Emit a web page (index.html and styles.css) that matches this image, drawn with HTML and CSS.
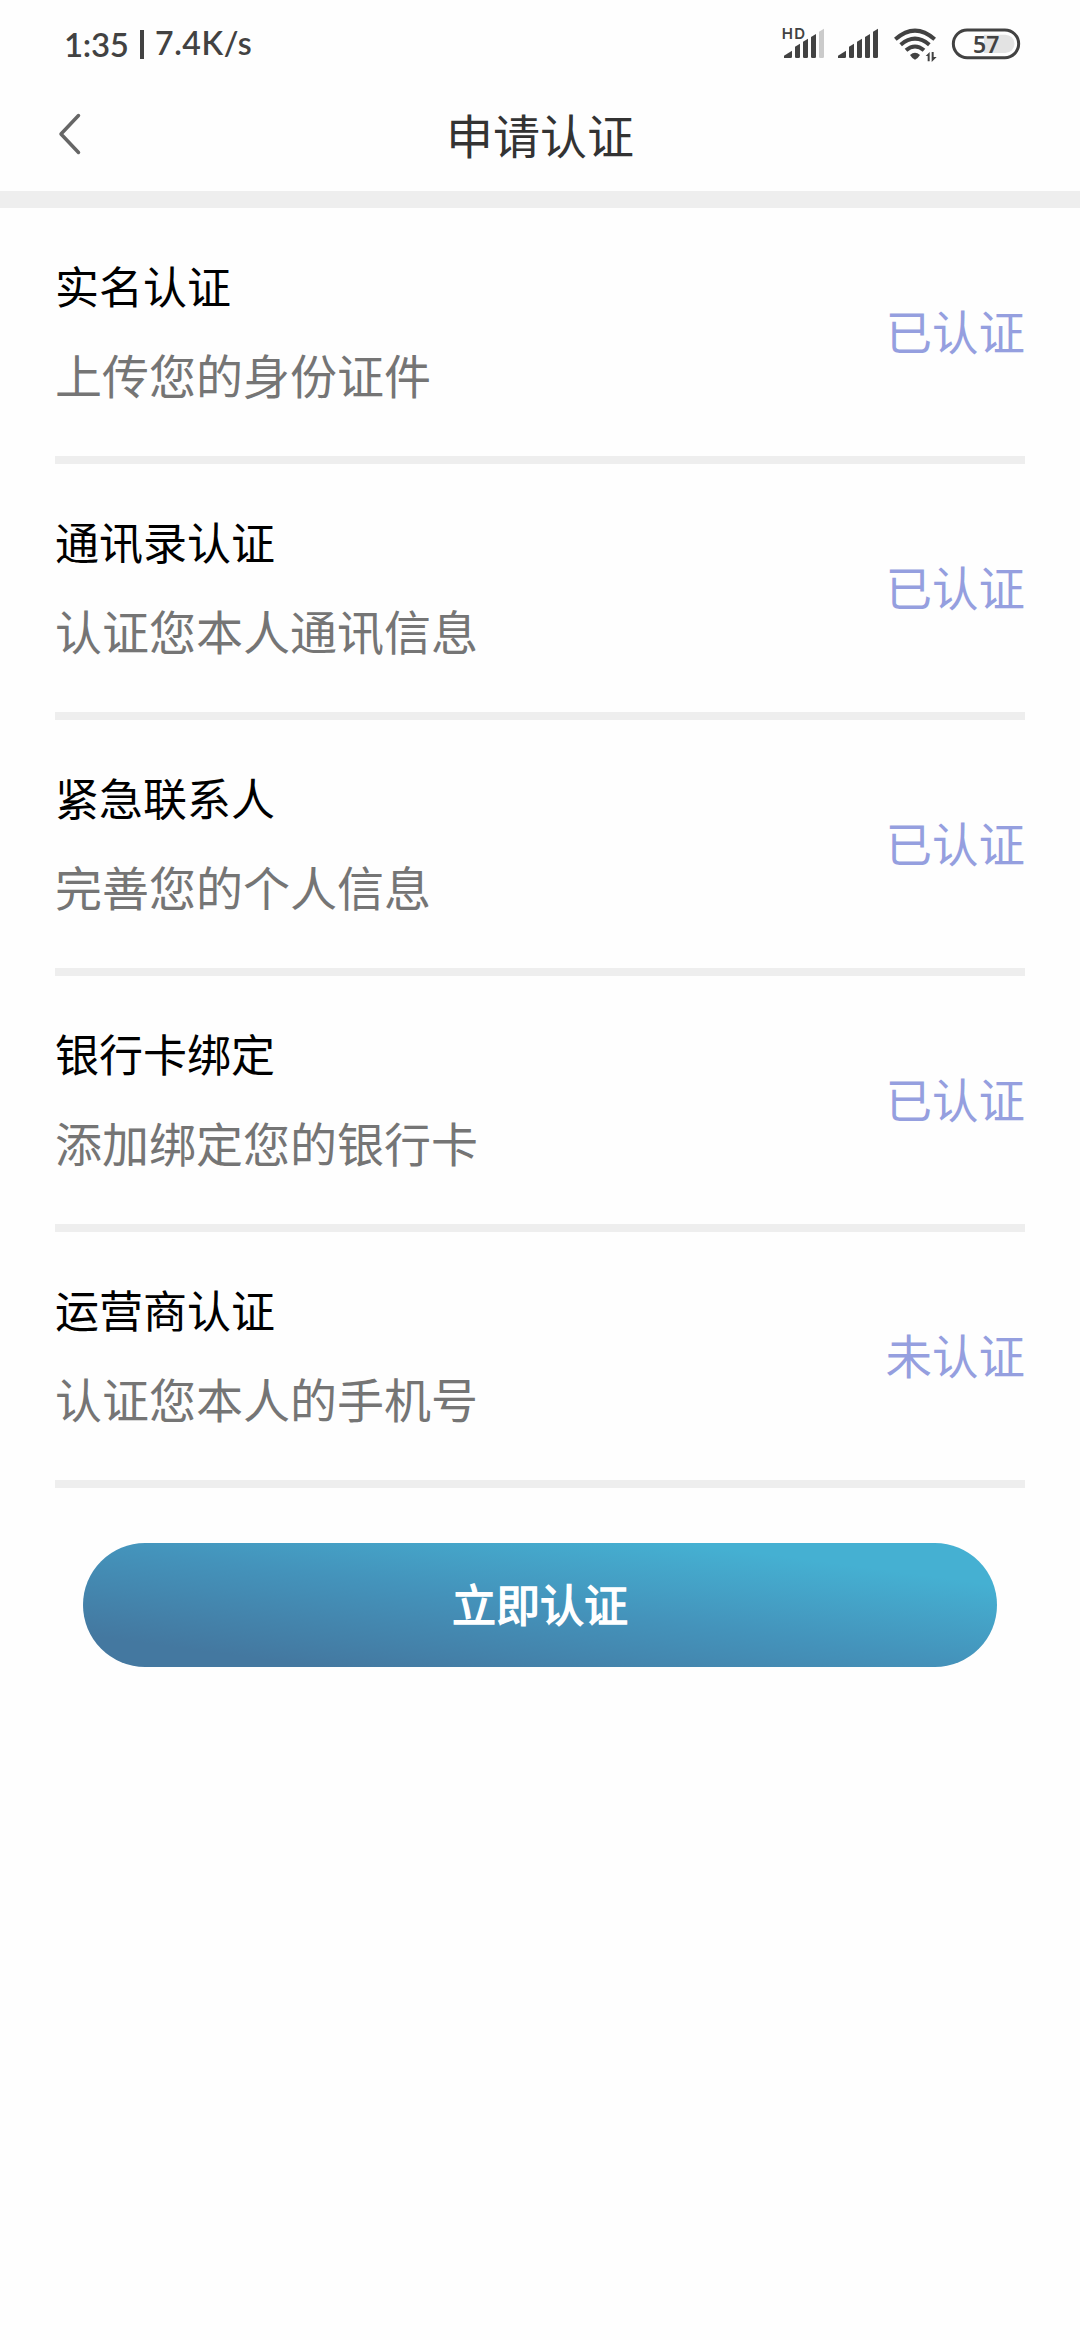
FILE: index.html
```html
<!DOCTYPE html>
<html lang="zh-CN">
<head>
<meta charset="UTF-8">
<title>申请认证</title>
<link rel="stylesheet" href="styles.css">
</head>
<body>
<div class="status-bar">
  <div class="status-left">
    <span class="clock">1:35</span>
    <span class="separator"></span>
    <span class="speed">7.4K/s</span>
  </div>
  <svg class="status-icons" viewBox="0 0 810 210" aria-hidden="true">
    <text class="hd" x="35" y="87" textLength="70">HD</text>
    <g fill="#424242">
      <path d="M42 144V137L66 122V140Q66 144 62 144Z"/>
      <path d="M75 110L90 101V140Q90 144 86 144H79Q75 144 75 140Z"/>
      <path d="M99 95L114 86V140Q114 144 110 144H103Q99 144 99 140Z"/>
      <path d="M123 81L138 72V140Q138 144 134 144H127Q123 144 123 140Z"/>
      <path fill="#cbcbcb" d="M147 65L162 56V140Q162 144 158 144H151Q147 144 147 140Z"/>
      <path d="M204 144V137L228 122V140Q228 144 224 144Z"/>
      <path d="M237 110L252 101V140Q252 144 248 144H241Q237 144 237 140Z"/>
      <path d="M261 95L276 86V140Q276 144 272 144H265Q261 144 261 140Z"/>
      <path d="M285 81L300 72V140Q300 144 296 144H289Q285 144 285 140Z"/>
      <path d="M309 65L324 56V140Q324 144 320 144H313Q309 144 309 140Z"/>
      <path d="M420 135Q435 122 450 135Q444 145 435 149Q426 145 420 135Z"/>
      <path d="M467 138L479 126V154H473V138ZM485 126H491V141H500L485 156Z"/>
    </g>
    <g fill="none" stroke="#424242" stroke-width="12">
      <path d="M376 88Q435 36 494 88"/>
      <path d="M392 104Q435 68 478 104"/>
      <path d="M408 121Q435 98 462 121"/>
    </g>
    <path d="M642 74H706A27 27 0 0 1 706 129H642Z" fill="#e3e3e3"/>
    <rect x="550" y="60" width="196" height="83" rx="41.500" fill="none" stroke="#424242" stroke-width="9"/>
    <text class="level" x="609" y="129">57</text>
  </svg>
</div>
<header class="nav">
  <svg class="back" viewBox="0 0 24 42" aria-hidden="true"><path d="M20.500 2.500L3 21L20.500 39.500"/></svg>
  <h1 class="title">申请认证</h1>
</header>
<main class="list">
  <section class="item">
    <div><h2 class="name">实名认证</h2><p class="desc">上传您的身份证件</p></div>
    <span class="state">已认证</span>
  </section>
  <section class="item">
    <div><h2 class="name">通讯录认证</h2><p class="desc">认证您本人通讯信息</p></div>
    <span class="state">已认证</span>
  </section>
  <section class="item">
    <div><h2 class="name">紧急联系人</h2><p class="desc">完善您的个人信息</p></div>
    <span class="state">已认证</span>
  </section>
  <section class="item">
    <div><h2 class="name">银行卡绑定</h2><p class="desc">添加绑定您的银行卡</p></div>
    <span class="state">已认证</span>
  </section>
  <section class="item">
    <div><h2 class="name">运营商认证</h2><p class="desc">认证您本人的手机号</p></div>
    <span class="state">未认证</span>
  </section>
</main>
<button class="submit" type="button">立即认证</button>
</body>
</html>
```

FILE: styles.css
```css
* {
  box-sizing: border-box;
}

body {
  margin: 0;
  min-height: 2340px;
  background: #fefefe;
  font-family: "Noto Sans CJK SC", sans-serif;
}

.status-bar {
  display: flex;
  justify-content: space-between;
  height: 80px;
  padding: 10px 40px 0 64px;
}

.status-left {
  display: flex;
  align-items: center;
  height: 68px;
  color: #424242;
  font-family: Lato, sans-serif;
  font-weight: 600;
  line-height: 40px;
}

.clock {
  width: 76px;
  font-size: 33px;
  letter-spacing: -0.3px;
}

.separator {
  width: 4px;
  height: 29px;
  background: #424242;
}

.speed {
  margin: 0 0 2px 11px;
  font-size: 32px;
  letter-spacing: 0.6px;
}

.status-icons {
  width: 270px;
  height: 70px;
}

.hd,
.level {
  fill: #424242;
  font-weight: 600;
}

.hd {
  font-family: Inter, sans-serif;
  font-size: 45px;
}

.level {
  font-family: "Noto Sans", sans-serif;
  font-size: 69px;
}

.nav {
  display: grid;
  grid-template-columns: 1fr auto 1fr;
  align-items: center;
  height: 128px;
  padding: 0 58px 3px;
  border-bottom: 17px solid #eee;
}

.back {
  width: 24px;
  height: 42px;
  fill: none;
  stroke: #666;
  stroke-width: 3.5;
  stroke-linecap: round;
  stroke-linejoin: round;
}

.title {
  margin: 0;
  color: #333;
  font-size: 47px;
  font-weight: 400;
  line-height: 68px;
}

.list {
  padding: 0 55px;
}

.item {
  display: flex;
  justify-content: space-between;
  align-items: center;
  height: 256px;
  padding-bottom: 2px;
  border-bottom: 8px solid #eee;
}

.name,
.desc {
  margin: 0;
  font-weight: 400;
}

.name {
  color: #000;
  font-size: 44px;
  line-height: 80px;
}

.desc {
  margin-top: 5px;
  color: #757575;
  font-size: 47px;
  line-height: 88px;
}

.state {
  padding-bottom: 2px;
  color: #959fdf;
  font-size: 46.5px;
  line-height: 80px;
}

.submit {
  display: block;
  width: 914px;
  height: 124px;
  margin: 55px auto 0;
  padding: 0 0 4px;
  border: 0;
  border-radius: 62px;
  background: linear-gradient(to top right, #4478a0 13%, #4493bb 50%, #45b0d2 83%);
  color: #fff;
  font-family: inherit;
  font-size: 44px;
  font-weight: 400;
  -webkit-text-stroke: 1.5px #fff;
}
```
